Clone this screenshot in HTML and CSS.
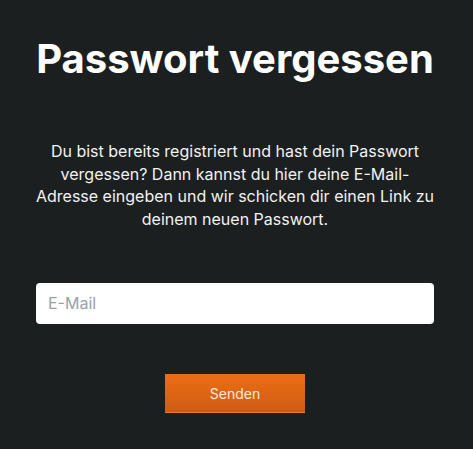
FILE: index.html
```html
<!DOCTYPE html>
<html lang="de">
<head>
<meta charset="utf-8">
<title>Passwort vergessen</title>
<link rel="stylesheet" href="styles.css">
</head>
<body>
<main class="page">
  <h1 class="title">Passwort vergessen</h1>
  <p class="intro">Du bist bereits registriert und hast dein Passwort vergessen? Dann kannst du hier deine E-Mail-Adresse eingeben und wir schicken dir einen Link zu deinem neuen Passwort.</p>
  <form class="form">
    <input class="field" type="email" placeholder="E-Mail">
    <button class="submit" type="button">Senden</button>
  </form>
</main>
</body>
</html>
```
FILE: styles.css
```css
html, body {
  margin: 0;
  padding: 0;
  background: #1b1f20;
}
body {
  font-family: Inter, "Noto Sans", sans-serif;
  color: #ffffff;
}
.page {
  padding: 35px 39px 0 36px;
  box-sizing: border-box;
  width: 473px;
  display: flex;
  flex-direction: column;
  align-items: center;
}
.title {
  margin: 0;
  font-size: 40px;
  line-height: 48px;
  font-weight: 700;
  text-align: center;
  white-space: nowrap;
}
.intro {
  margin: 57px -6px 0;
  font-size: 16px;
  line-height: 1.42;
  text-align: center;
  color: #f2f2f2;
}
.form {
  margin-top: 52px;
  width: 100%;
  display: flex;
  flex-direction: column;
  align-items: center;
}
.field {
  box-sizing: border-box;
  width: 100%;
  height: 41px;
  border: none;
  border-radius: 4px;
  background: #ffffff;
  padding: 0 12px;
  font-family: Inter, sans-serif;
  font-size: 16px;
  color: #333;
  outline: none;
}
.field::placeholder {
  color: #9aa1a8;
}
.submit {
  margin-top: 50px;
  width: 140px;
  height: 39px;
  border: none;
  border-radius: 0;
  background: linear-gradient(#eb6e16, #cf5b12);
  box-shadow: inset 0 -1px 0 #ef7a22;
  color: #fde9db;
  font-family: Inter, sans-serif;
  font-size: 14px;
  cursor: pointer;
}
```
